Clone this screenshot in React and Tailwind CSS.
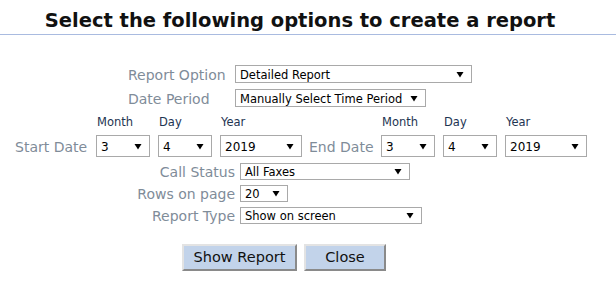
import React from "react";

function Sel({ w, h = 18, text, textSize = "text-[11.5px]" }) {
  return (
    <div
      className={`flex items-center justify-between border border-[#a9a9a9] bg-white pl-[4px] pr-[7px] text-black ${textSize}`}
      style={{ width: w, height: h }}
    >
      <span className="leading-[14px] pt-[1px] whitespace-nowrap">{text}</span>
      <svg width="8" height="7" viewBox="0 0 8 7" className="shrink-0">
        <polygon points="0.5,1 7.5,1 4,6.5" fill="#000" />
      </svg>
    </div>
  );
}

function DateCol({ label, w, text }) {
  return (
    <div className="flex flex-col">
      <div className="pl-[1px] text-[11.5px] leading-[14px] text-[#1e3452] mb-[6px]">{label}</div>
      <Sel w={w} h={22} text={text} textSize="text-[12px]" />
    </div>
  );
}

export default function App() {
  return (
    <div
      className="w-[616px] h-[290px] bg-white overflow-hidden"
      style={{ fontFamily: '"DejaVu Sans", Verdana, sans-serif' }}
    >
      <div className="h-[35px] border-b border-[#a9bbe0] flex items-start">
        <div className="w-[600px] pt-[10px] text-center text-[19.5px] leading-[22px] font-bold text-[#111]">
          Select the following options to create a report
        </div>
      </div>

      <div className="mt-[30px] ml-[128px] flex items-center">
        <div className="w-[107px] text-[14px] text-[#7f8c99] leading-[16px] pt-[2px]">Report Option</div>
        <Sel w={237} text="Detailed Report" />
      </div>
      <div className="mt-[6px] ml-[128px] flex items-center">
        <div className="w-[107px] text-[14px] text-[#7f8c99] leading-[16px] pt-[2px]">Date Period</div>
        <Sel w={191} text="Manually Select Time Period" />
      </div>

      <div className="mt-[8px] ml-[15px] flex items-end">
        <div className="w-[81px] h-[22px] flex items-center pt-[2px] text-[14px] text-[#7f8c99] leading-none">Start Date</div>
        <div className="flex gap-[8px]">
          <DateCol label="Month" w={54} text="3" />
          <DateCol label="Day" w={54} text="4" />
          <DateCol label="Year" w={82} text="2019" />
        </div>
        <div className="w-[79px] h-[22px] pl-[7px] pt-[2px] flex items-center text-[14px] text-[#7f8c99] leading-none">End Date</div>
        <div className="flex gap-[8px]">
          <DateCol label="Month" w={54} text="3" />
          <DateCol label="Day" w={54} text="4" />
          <DateCol label="Year" w={82} text="2019" />
        </div>
      </div>

      <div className="mt-[6px] flex flex-col gap-[5px]">
        <div className="flex items-center">
          <div className="w-[235px] text-right text-[14px] text-[#7f8c99] leading-[15px] pt-[2px]">Call Status</div>
          <div className="ml-[5px]"><Sel w={170} h={17} text="All Faxes" /></div>
        </div>
        <div className="flex items-center">
          <div className="w-[235px] text-right text-[14px] text-[#7f8c99] leading-[15px] pt-[2px]">Rows on page</div>
          <div className="ml-[5px]"><Sel w={48} h={17} text="20" /></div>
        </div>
        <div className="flex items-center">
          <div className="w-[235px] text-right text-[14px] text-[#7f8c99] leading-[15px] pt-[2px]">Report Type</div>
          <div className="ml-[5px]"><Sel w={182} h={17} text="Show on screen" /></div>
        </div>
      </div>

      <div className="mt-[20px] ml-[182px] flex gap-[7px]">
        <button className="w-[115px] h-[27px] bg-[#c2d3ea] border-2 border-t-[#e3e3e3] border-l-[#e3e3e3] border-b-[#8a8a8a] border-r-[#8a8a8a] text-[14.5px] text-[#111] leading-none">
          Show Report
        </button>
        <button className="w-[82px] h-[27px] bg-[#c2d3ea] border-2 border-t-[#e3e3e3] border-l-[#e3e3e3] border-b-[#8a8a8a] border-r-[#8a8a8a] text-[14.5px] text-[#111] leading-none">
          Close
        </button>
      </div>
    </div>
  );
}
